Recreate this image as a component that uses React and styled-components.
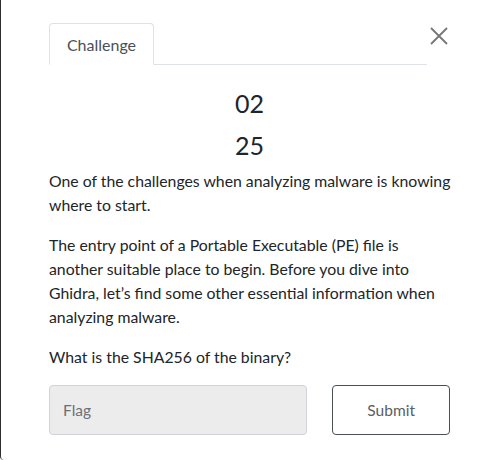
import React from 'react';
import styled, { createGlobalStyle } from 'styled-components';

const GlobalStyle = createGlobalStyle`
  html, body {
    margin: 0;
    padding: 0;
    background: #ffffff;
  }
  body {
    font-family: Lato, "Liberation Sans", sans-serif;
  }
`;

const Modal = styled.div`
  position: relative;
  box-sizing: border-box;
  width: 498px;
  height: 460px;
  background: #fff;
  border-left: 1px solid #2f2f2f;
  border-bottom-left-radius: 4px;
  padding: 23px 48px 0 48px;
`;

const CloseButton = styled.button`
  position: absolute;
  top: 25px;
  right: 48px;
  width: 22px;
  height: 22px;
  padding: 0;
  border: none;
  background: transparent;
  color: #767676;
  cursor: pointer;
  display: flex;
  align-items: center;
  justify-content: center;
`;

const Tabs = styled.div`
  display: flex;
  width: 378px;
  border-bottom: 1px solid #dee2e6;
`;

const Tab = styled.div`
  box-sizing: border-box;
  height: 42px;
  width: 105px;
  margin-bottom: -1px;
  display: flex;
  align-items: center;
  justify-content: center;
  border: 1px solid #dee2e6;
  border-bottom-color: ${(p) => (p.active ? '#fff' : '#dee2e6')};
  border-radius: 4px 4px 0 0;
  background: #fff;
  color: #495057;
  font-size: 16px;
`;

const Counter = styled.div`
  display: flex;
  flex-direction: column;
  align-items: center;
  margin-top: 17px;
  color: #212529;
  font-size: 25px;
  line-height: 42px;
`;

const Body = styled.div`
  width: 405px;
  margin-top: 3px;
  color: #212529;
  font-size: 15.8px;
  line-height: 24px;

  p {
    margin: 0 0 16px 0;
  }
`;

const FlagForm = styled.form`
  display: flex;
  gap: 25px;
  margin-top: 14px;
`;

const FlagInput = styled.input`
  box-sizing: border-box;
  width: 259px;
  height: 50px;
  padding: 0 13px;
  border: 1px solid #cfd3d7;
  border-radius: 4px;
  background: #ececec;
  font-family: Lato, "Liberation Sans", sans-serif;
  font-size: 15.5px;
  color: #212529;

  &::placeholder {
    color: #6c6f73;
  }
`;

const SubmitButton = styled.button`
  box-sizing: border-box;
  width: 118px;
  height: 50px;
  border: 1px solid #4a4f55;
  border-radius: 4px;
  background: #fff;
  color: #5a6066;
  font-family: Lato, "Liberation Sans", sans-serif;
  font-size: 15.5px;
  cursor: pointer;
`;

export default function App() {
  return (
    <>
      <GlobalStyle />
      <Modal>
        <CloseButton aria-label="Close">
          <svg width="20" height="20" viewBox="0 0 20 20">
            <path d="M2 2 L18 18 M18 2 L2 18" stroke="currentColor" strokeWidth="1.8" fill="none" />
          </svg>
        </CloseButton>
        <Tabs>
          <Tab active>Challenge</Tab>
        </Tabs>
        <Counter>
          <span>02</span>
          <span>25</span>
        </Counter>
        <Body>
          <p>One of the challenges when analyzing malware is knowing where to start.</p>
          <p>
            The entry point of a Portable Executable (PE) file is
            <br />
            another suitable place to begin. Before you dive into Ghidra, let’s find some other
            essential information when analyzing malware.
          </p>
          <p>What is the SHA256 of the binary?</p>
        </Body>
        <FlagForm onSubmit={(e) => e.preventDefault()}>
          <FlagInput placeholder="Flag" />
          <SubmitButton type="submit">Submit</SubmitButton>
        </FlagForm>
      </Modal>
    </>
  );
}
